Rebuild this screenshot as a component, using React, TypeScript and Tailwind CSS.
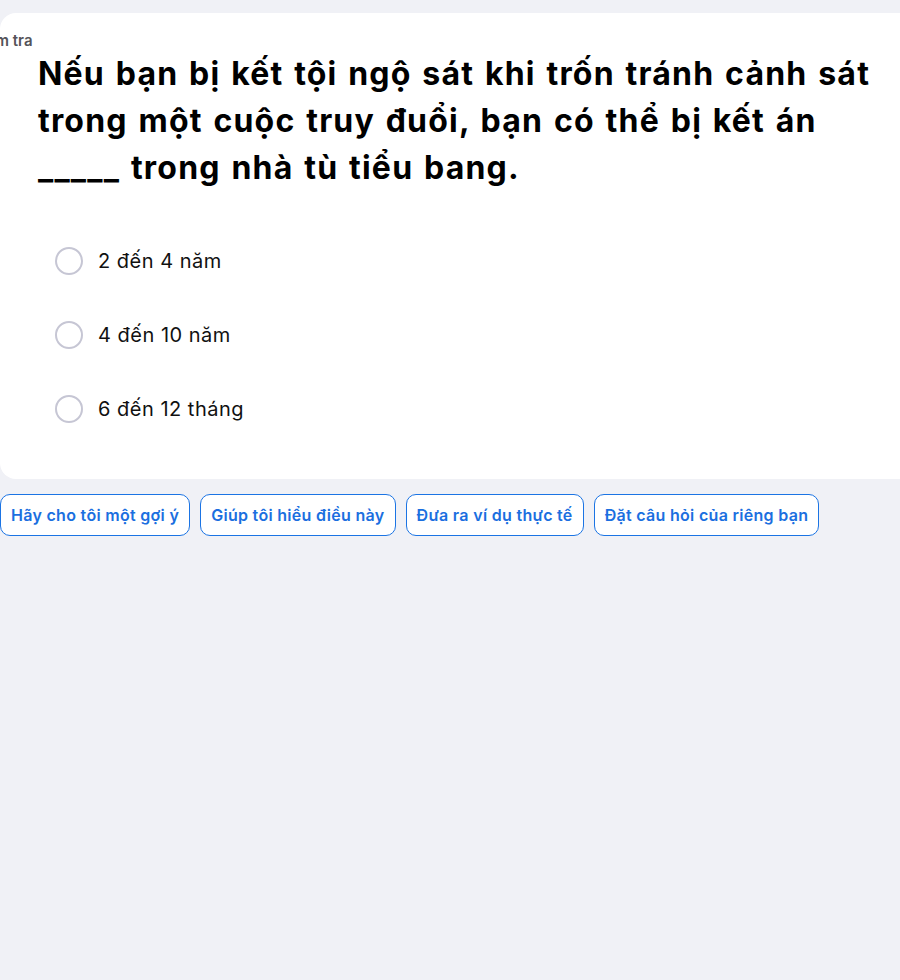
import React from "react";

const options = ["2 đến 4 năm", "4 đến 10 năm", "6 đến 12 tháng"];
const actions = [
  "Hãy cho tôi một gợi ý",
  "Giúp tôi hiểu điều này",
  "Đưa ra ví dụ thực tế",
  "Đặt câu hỏi của riêng bạn",
];

export default function App() {
  return (
    <div
      className="min-h-[980px] w-[900px] overflow-hidden bg-[#f0f1f6] pt-[13px]"
      style={{ fontFamily: "Inter, 'Noto Sans', sans-serif" }}
    >
      <div className="mr-[-20px] rounded-2xl bg-white pb-[56px] pt-[20px]">
        <div className="ml-[-28px] text-[15px] font-semibold leading-[16px] text-[#555459]">
          Kiểm tra
        </div>
        <h1 className="ml-[38px] mt-[1px] whitespace-nowrap text-[32px] font-bold leading-[47px] tracking-[1.2px] [word-spacing:2px] text-black">
          Nếu bạn bị kết tội ngộ sát khi trốn tránh cảnh sát
          <br />
          trong một cuộc truy đuổi, bạn có thể bị kết án
          <br />
          _____ trong nhà tù tiểu bang.
        </h1>
        <div className="ml-[55px] mt-[56px] flex flex-col gap-[46px]">
          {options.map((o) => (
            <label key={o} className="flex items-center gap-[15px]">
              <span className="h-[28px] w-[28px] rounded-full border-2 border-[#c6c6d4] bg-white" />
              <span className="text-[20px] leading-[28px] tracking-[0.5px] text-[#111]">{o}</span>
            </label>
          ))}
        </div>
      </div>
      <div className="mt-[15px] flex gap-[10px]">
        {actions.map((a) => (
          <button
            key={a}
            className="h-[42px] rounded-[10px] border border-[#1b74e4] bg-white px-[10px] text-[16px] font-semibold tracking-[0.3px] text-[#1b6fe0]"
          >
            {a}
          </button>
        ))}
      </div>
    </div>
  );
}
